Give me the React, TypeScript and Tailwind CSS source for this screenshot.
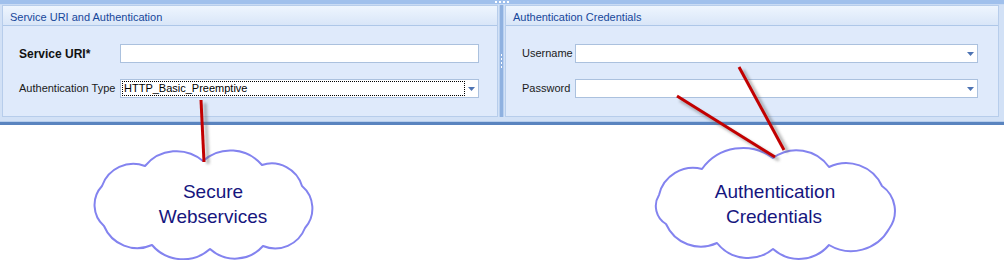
import React from 'react';

type Pt = [number, number];

// builds a cloud outline: arcs bulging outward between cusp points (clockwise)
const cloudPath = (pts: Pt[]) => {
    let d = `M ${pts[0][0]} ${pts[0][1]}`;
    for (let i = 0; i < pts.length; i++) {
        const a = pts[i];
        const b = pts[(i + 1) % pts.length];
        const chord = Math.hypot(b[0] - a[0], b[1] - a[1]);
        const r = (chord * 0.7).toFixed(1);
        d += ` A ${r} ${r} 0 0 1 ${b[0]} ${b[1]}`;
    }
    return d + ' Z';
};

const leftCloud: Pt[] = [
    [102, 186], [145, 166], [203, 161], [262, 165], [302, 186],
    [305, 228], [263, 246], [210, 249], [152, 245], [104, 226],
];

const rightCloud: Pt[] = [
    [659, 195], [702, 169], [773, 158], [829, 167], [882, 186],
    [889, 229], [829, 245], [773, 249], [717, 243], [666, 224],
];

const DropArrow = () => (
    <div className="w-[12px] flex items-center justify-center">
        <svg width="7" height="4" viewBox="0 0 7 4">
            <polygon points="0,0 7,0 3.5,4" fill="#4d73b3" />
        </svg>
    </div>
);

const TextBox = () => <div className="flex-1 h-[19px] bg-white border border-[#abc1de]" />;

const ComboBox = ({ value, focused }: { value?: string; focused?: boolean }) => (
    <div className="flex-1 h-[19px] bg-white border border-[#abc1de] flex p-[1px]">
        <div
            className={`flex-1 flex items-center pl-[1px] text-[11px] text-black ${
                focused ? 'border border-dotted border-black' : ''
            }`}
        >
            {value}
        </div>
        <DropArrow />
    </div>
);

const PanelHeader = ({ title }: { title: string }) => (
    <div className="h-[20px] bg-gradient-to-b from-[#eef5fe] to-[#d9e6f8] border-b border-[#aec7e8] pl-[7px] pt-[3px] text-[11px] leading-[17px] text-[#17479a]">
        {title}
    </div>
);

export default function App() {
    return (
        <div className="relative w-[1004px] h-[260px] bg-white overflow-hidden font-['Liberation_Sans',Arial,sans-serif]">
            {/* docked form frame */}
            <div className="h-[125px] bg-[#d2e1f6] border-b-[3px] border-[#5a84bf] flex flex-col">
                <div className="h-[4px] bg-[#a0c0ec] flex justify-center items-center gap-[2px] border-b border-[#c9dbf4] box-content">
                    <div className="w-[2px] h-[2px] bg-white" />
                    <div className="w-[2px] h-[2px] bg-white" />
                    <div className="w-[2px] h-[2px] bg-white" />
                    <div className="w-[2px] h-[2px] bg-white" />
                </div>

                <div className="flex pl-[2px] pr-[5px] pb-[4px] flex-1 border-b border-[#b6cdec]">
                    {/* Service URI and Authentication */}
                    <div className="w-[496px] border border-[#b7cdeb] bg-[#dfeafb] flex flex-col">
                        <PanelHeader title="Service URI and Authentication" />
                        <div className="flex flex-col gap-[16px] pt-[18px] pl-[16px] pr-[18px]">
                            <div className="flex items-center">
                                <span className="w-[101px] text-[12px] font-bold text-[#111]">Service URI*</span>
                                <TextBox />
                            </div>
                            <div className="flex items-center">
                                <span className="w-[101px] text-[11px] text-[#1a1a1a]">Authentication Type</span>
                                <ComboBox value="HTTP_Basic_Preemptive" focused />
                            </div>
                        </div>
                    </div>

                    {/* splitter */}
                    <div className="w-[7px] flex justify-center">
                        <div className="w-[5px] bg-[#8fb1e0] border-x border-[#b9d0ef] flex flex-col items-center justify-center gap-[2px]">
                            <div className="w-[1px] h-[2px] bg-white" />
                            <div className="w-[1px] h-[2px] bg-white" />
                            <div className="w-[1px] h-[2px] bg-white" />
                            <div className="w-[1px] h-[2px] bg-white" />
                        </div>
                    </div>

                    {/* Authentication Credentials */}
                    <div className="flex-1 border border-[#b7cdeb] bg-[#dfeafb] flex flex-col">
                        <PanelHeader title="Authentication Credentials" />
                        <div className="flex flex-col gap-[16px] pt-[18px] pl-[16px] pr-[20px]">
                            <div className="flex items-center">
                                <span className="w-[53px] text-[11px] text-[#1a1a1a]">Username</span>
                                <ComboBox />
                            </div>
                            <div className="flex items-center">
                                <span className="w-[53px] text-[11px] text-[#1a1a1a]">Password</span>
                                <ComboBox />
                            </div>
                        </div>
                    </div>
                </div>
            </div>

            {/* callout annotations */}
            <svg className="absolute inset-0 pointer-events-none" width="1004" height="260" viewBox="0 0 1004 260">
                <defs>
                    <filter id="blur" x="-20%" y="-20%" width="140%" height="140%">
                        <feGaussianBlur stdDeviation="1.6" />
                    </filter>
                </defs>

                <path d={cloudPath(leftCloud)} fill="white" stroke="#8383ef" strokeWidth="2" strokeLinejoin="round" />
                <path d={cloudPath(rightCloud)} fill="white" stroke="#8383ef" strokeWidth="2" strokeLinejoin="round" />

                <g stroke="#6b6b6b" strokeWidth="3" opacity="0.55" filter="url(#blur)">
                    <line x1="205" y1="103" x2="208" y2="164" />
                    <line x1="743" y1="70" x2="788" y2="152" />
                    <line x1="680" y1="100" x2="779" y2="160" />
                </g>
                <g stroke="#c20000" strokeWidth="3">
                    <line x1="201" y1="100" x2="204" y2="162" />
                    <line x1="739" y1="67" x2="784" y2="150" />
                    <line x1="677" y1="96" x2="775" y2="157" />
                </g>

                <g fill="#16167e" fontSize="19" textAnchor="middle" fontFamily="'Liberation Sans', Arial, sans-serif">
                    <text x="213" y="198">Secure</text>
                    <text x="213" y="223">Webservices</text>
                    <text x="775" y="198">Authentication</text>
                    <text x="774" y="223">Credentials</text>
                </g>
            </svg>
        </div>
    );
}
